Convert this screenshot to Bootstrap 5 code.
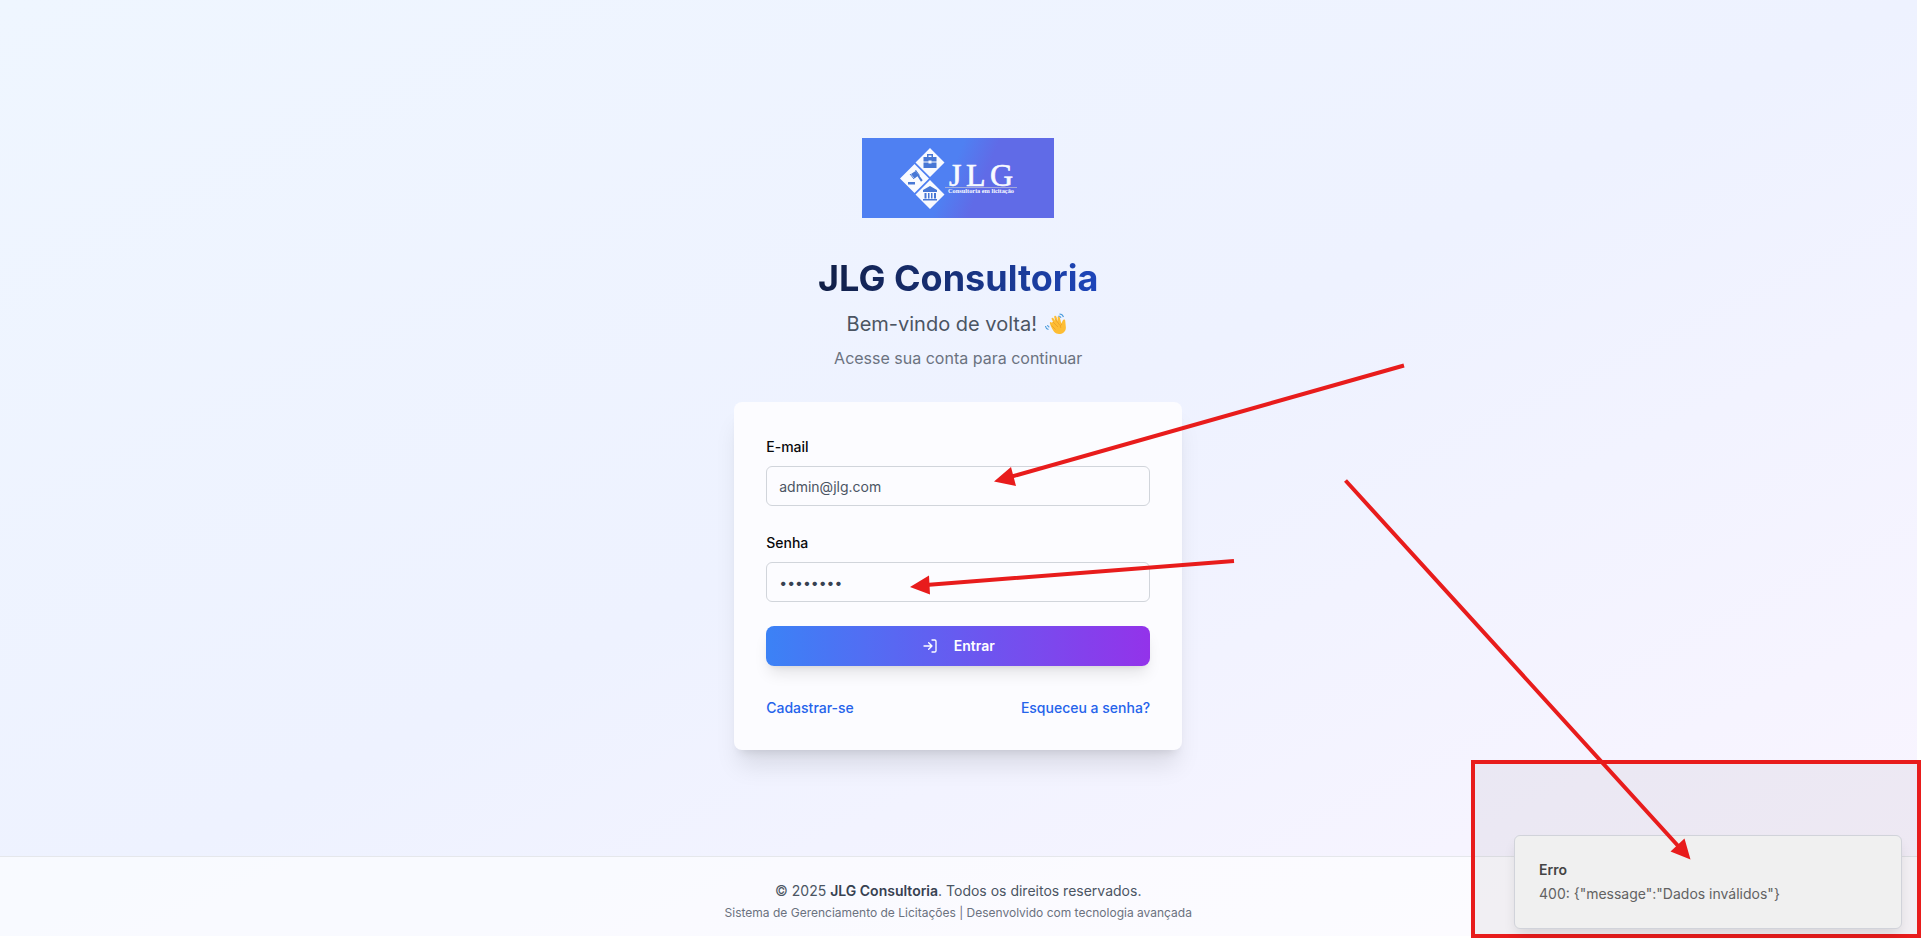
<!DOCTYPE html>
<html lang="pt-BR">
<head>
<meta charset="utf-8">
<title>JLG Consultoria</title>
<meta name="viewport" content="width=device-width, initial-scale=1">
<link href="https://cdn.jsdelivr.net/npm/bootstrap@5.3.0/dist/css/bootstrap.min.css" rel="stylesheet">
<style>
body{font-family:Inter,"Noto Sans",sans-serif;font-size:14px;line-height:20px;background:#fff;overflow:hidden;height:939px}
.page{width:1916.500px;height:936px;background:linear-gradient(to bottom right,#eff6ff,#eef2ff,#faf5ff)}
.page main{padding-top:32px}
.logo{width:192px;height:80px}
.title{font-size:36px;line-height:40px;margin:40px 0 12px;background:linear-gradient(to right,#111f45,#172f75 45%,#1e46bb);-webkit-background-clip:text;background-clip:text;color:transparent}
.hello{font-size:20px;line-height:28px;color:#4b5563}
.sub{font-size:16px;line-height:24px;color:#6b7280;margin-top:8px}
.wave{width:22px;height:22px;margin-right:3px}
.login{width:448px;height:348px;padding:32px;border:0;border-radius:8px;background:#fcfcff;margin-top:32px;box-shadow:0 20px 25px -5px rgba(0,0,0,.1),0 8px 10px -6px rgba(0,0,0,.1)}
.login .form-label{font-weight:500;line-height:24px;color:#09090b;margin:0;padding:1px 0 7px}
.login .form-control{height:40px;font-size:14px;line-height:20px;padding:8px 12px;border-color:#d1d5db;border-radius:6px;background:transparent;color:#4b5563}
.login .form-control[type=password]{color:#374151}
.enter{height:40px;border:0;border-radius:8px;color:#fff;font-weight:600;font-size:14px;background:linear-gradient(to right,#3b82f6,#9333ea);box-shadow:0 10px 15px -3px rgba(0,0,0,.1),0 4px 6px -4px rgba(0,0,0,.1)}
.links a{color:#2563eb;font-weight:500}
.foot{height:80px;border-top:1px solid #e5e7eb;background:rgba(255,255,255,.6);color:#4b5563;padding-top:24px}
.foot b{font-weight:600;color:#374151}
.foot small{font-size:12px;line-height:16px;color:#6b7280;margin-top:4px}
.error-zone{right:1px;bottom:1px;width:450px;height:178px;border:4px solid #e81c1c;background:rgba(50,45,40,.055);padding-top:71px;padding-left:39px}
.notice{width:388px;height:94px;border:1px solid #d1d3da;border-radius:6px;background:#f0f0f0;box-shadow:0 8px 14px -3px rgba(0,0,0,.12);color:#626262;padding:24px}
.notice strong{font-weight:600;color:#444}
.arrows{inset:0;width:1922px;height:939px;pointer-events:none}
</style>
<script src="https://cdn.jsdelivr.net/npm/bootstrap@5.3.0/dist/js/bootstrap.bundle.min.js"></script>
</head>
<body class="position-relative">
<div class="page d-flex flex-column">
<main class="flex-grow-1 d-flex flex-column align-items-center justify-content-center">
<svg class="logo" viewBox="0 0 192 80">
<defs><linearGradient id="lg" gradientUnits="userSpaceOnUse" x1="75" y1="30" x2="142" y2="58"><stop offset=".2" stop-color="#4f80f2"/><stop offset=".65" stop-color="#606be7"/></linearGradient></defs>
<rect width="192" height="80" fill="url(#lg)"/>
<g fill="#f8faff"><path d="M68 10 82.500 24.500 68 39 53.500 24.500zM52.500 26 67 40.500 52.500 55 38 40.500zM68 42 82.500 56.500 68 71 53.500 56.500z"/><text x="87" y="47.500" font-family="Liberation Serif,serif" font-size="32" textLength="64" stroke="#f8faff" stroke-width=".6">JLG</text><text x="86" y="55" font-family="Liberation Serif,serif" font-weight="bold" font-size="5.800" textLength="66" lengthAdjust="spacingAndGlyphs">Consultoria em licitação</text></g>
<path d="M83 49.500H155" stroke="#b5b9d8" stroke-width=".8"/>
<g fill="#4777d5"><path d="M61.500 19h13v4.500h-5V22.500h-3v1h-5zM61.500 24.500h5v1h3v-1h5v5.500h-13zM65 19v-3h6v3h-1.500v-1.500h-3V19zM61 54v-2l7-4 7 4v2zM62.500 55h2v5.500h-2zM66 55h1.500v5.500H66zM69 55h1.500v5.500H69zM72 55h2v5.500h-2zM61 61h14v1.500H61zM46 44h7v2.500h-7z"/><path d="m49 36 4.500-3 3.500 4-4.500 3.500zM55 37.500l1.200-1.200 4.500 6-1.700 1.500z"/><path d="m48 36 4 5M53.500 32l4 5.500" stroke="#4777d5"/></g>
</svg>
<h1 class="title fw-bold">JLG Consultoria</h1>
<p class="hello mb-0 d-flex align-items-center"><span>Bem-vindo de volta!</span>
<svg class="wave ms-2" viewBox="0 0 22 22"><path d="M6 10 4 7.800c-.8-1 .6-2.200 1.500-1.200L8 8.700 6 5.300c-.7-1.200 1-2.200 1.800-1.100l3 4.200-1.500-3.800c-.5-1.300 1.300-2 2-.7l3.200 5.600.6-3.400c.2-1.500 2.100-1.700 2.500-.2L20 12c1.600 5-3.200 9-7.400 8.500C9 20 5 15 3.500 12.500c-.7-1.200.7-2 1.500-1.100z" fill="#fdbd34" transform="translate(1.500 0) rotate(16 11 11)"/><path d="m8 9 5 5M10.500 6.500l4.500 6M6.500 12.500l4 4M17 11c-2 1-2 3-1 4" stroke="#e99a27" stroke-width=".7" fill="none"/><path d="M14.500 1c2 0 3.300 1 4 3M13.500 3c1.500 0 2 .8 2.500 1.800M.5 13c.2 2 1.200 3 3 3.500M2.500 12c.2 1.300.8 1.800 1.800 2.300" fill="none" stroke="#4c9cdc" stroke-width="1.100"/></svg></p>
<p class="sub mb-0">Acesse sua conta para continuar</p>
<form class="login card">
<label class="form-label" for="email">E-mail</label>
<input id="email" class="form-control" value="admin@jlg.com">
<label class="form-label mt-4" for="password">Senha</label>
<input id="password" class="form-control" type="password" value="password">
<button type="button" class="enter d-flex align-items-center justify-content-center mt-4"><svg width="16" height="16" viewBox="0 0 24 24" fill="none" stroke="currentColor" stroke-width="2" stroke-linecap="round" stroke-linejoin="round"><path d="M15 3h4a2 2 0 0 1 2 2v14a2 2 0 0 1-2 2h-4M10 17l5-5-5-5M15 12H3"/></svg><span class="ms-3">Entrar</span></button>
<div class="links d-flex justify-content-between mt-4 pt-2"><a class="text-decoration-none">Cadastrar-se</a><a class="text-decoration-none">Esqueceu a senha?</a></div>
</form>
</main>
<footer class="foot text-center"><div>© 2025 <b>JLG Consultoria</b>. Todos os direitos reservados.</div><small class="d-block">Sistema de Gerenciamento de Licitações | Desenvolvido com tecnologia avançada</small></footer>
</div>
<aside class="error-zone position-absolute"><div class="notice"><strong class="d-block">Erro</strong><div class="mt-1">400: {"message":"Dados inválidos"}</div></div></aside>
<svg class="arrows position-absolute" viewBox="0 0 1922 939" stroke="#e81c1c" stroke-width="4" fill="#e81c1c">
<path d="M1404 365.500 1010 477M1234 561 926 585M1345.500 480.500 1680 848"/>
<path stroke="none" d="M994 481.500 1011 467 1016 486zM910 587 929 575.500 930 594.500zM1690.500 859.500 1670.500 851.500 1684.500 838.500z"/>
</svg>
</body>
</html>
